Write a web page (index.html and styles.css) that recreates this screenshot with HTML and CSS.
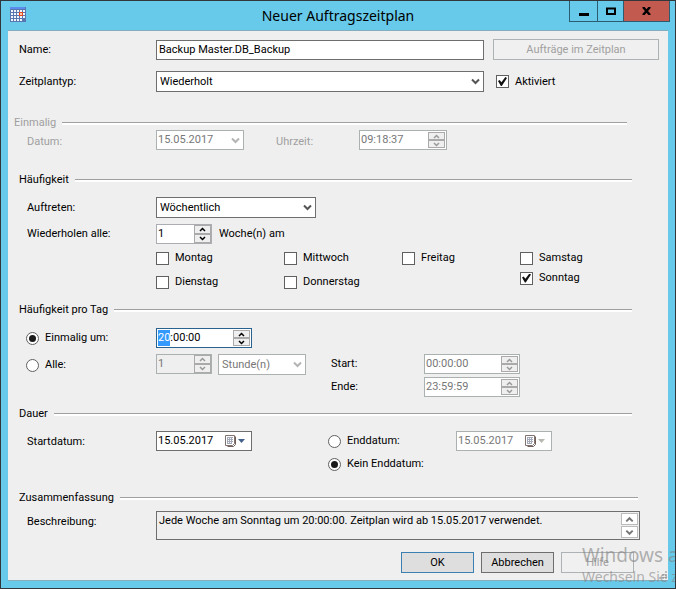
FILE: index.html
```html
<!DOCTYPE html>
<html lang="de">
<head>
<meta charset="utf-8">
<title>Neuer Auftragszeitplan</title>
<link rel="stylesheet" href="styles.css">
</head>
<body>
<svg class="defs" aria-hidden="true">
  <symbol id="chevron" viewBox="0 0 9 8"><path d="M1 1.500L4.500 5L8 1.500" fill="none" stroke="currentColor" stroke-width="2"/></symbol>
  <symbol id="up" viewBox="0 0 7 5"><path d="M1 4L3.500 1.500L6 4" fill="none" stroke="currentColor" stroke-width="1.500"/></symbol>
  <symbol id="down" viewBox="0 0 7 5"><path d="M1 1L3.500 3.500L6 1" fill="none" stroke="currentColor" stroke-width="1.500"/></symbol>
  <symbol id="calendar" viewBox="0 0 20 12">
    <path d="M2.500 11.500H8.500L10.500 9.500V1.500" fill="none" stroke="#70605c"/>
    <path d="M.5 .5H9.500V8.500L7.500 10.500H.5Z" fill="#fff" stroke="#82726e"/>
    <path d="M2 2.500H8M2 4.500H8M2 6.500H8M2 8.500H7M2.500 2V9M4.500 2V9M6.500 2V9" fill="none" stroke="#a3a9b8"/>
    <path d="M13 4H20L16.500 8Z" fill="currentColor"/>
  </symbol>
</svg>
<div class="window">
  <header class="titlebar">
    <svg class="app-icon" viewBox="0 0 16 15" aria-hidden="true">
      <rect width="16" height="15" fill="#5877ae"/>
      <rect width="15" height="2" fill="#5b8def"/>
      <path d="M1 3h2v2H1zM4 3h2v2H4zM7 3h2v2H7zM10 3h2v2h-2zM13 3h2v2h-2zM1 6h2v2H1zM4 6h2v2H4zM7 6h2v2H7zM13 6h2v2h-2zM1 9h2v2H1zM4 9h2v2H4zM7 9h2v2H7zM10 9h2v2h-2zM13 9h2v2h-2zM1 12h2v2H1zM4 12h2v2H4zM7 12h2v2H7zM10 12h2v2h-2z" fill="#f0f5ff"/>
      <rect x="9.500" y="5.500" width="3" height="3" fill="#ffc8a8" stroke="#e64a20"/>
    </svg>
    <h1>Neuer Auftragszeitplan</h1>
    <div class="window-buttons">
      <button type="button" class="minimize" aria-label="Minimieren"><svg width="10" height="9" viewBox="0 0 10 9"><path d="M0 6H10V9H0z"/></svg></button>
      <button type="button" class="maximize" aria-label="Maximieren"><svg width="10" height="8" viewBox="0 0 10 8"><path d="M1 1.500H9V7H1z" fill="none" stroke="#000" stroke-width="2"/></svg></button>
      <button type="button" class="close" aria-label="Schließen"><svg width="9" height="8" viewBox="0 0 9 8"><path d="M1 0L8 8M8 0L1 8" stroke="#000" stroke-width="2.400"/></svg></button>
    </div>
  </header>
  <form class="client">
    <div class="general">
      <label for="name">Name:</label>
      <input class="box" id="name" type="text" value="Backup Master.DB_Backup">
      <button type="button" class="push" disabled>Aufträge im Zeitplan</button>
      <label for="type">Zeitplantyp:</label>
      <span class="select"><select id="type"><option>Wiederholt</option></select><svg><use href="#chevron"/></svg></span>
      <label class="check"><input type="checkbox" checked>Aktiviert</label>
    </div>

    <section class="group once disabled">
      <h2>Einmalig</h2>
      <div class="row">
        <label class="caption" for="once-date">Datum:</label>
        <span class="select date"><select id="once-date" disabled><option>15.05.2017</option></select><svg><use href="#chevron"/></svg></span>
        <label class="time-label" for="once-time">Uhrzeit:</label>
        <span class="box field w88"><input id="once-time" type="text" value="09:18:37" disabled><span class="spin"><button type="button" disabled aria-label="Mehr"><svg><use href="#up"/></svg></button><button type="button" disabled aria-label="Weniger"><svg><use href="#down"/></svg></button></span></span>
      </div>
    </section>

    <section class="group frequency">
      <h2>Häufigkeit</h2>
      <div class="row">
        <label class="caption" for="occurs">Auftreten:</label>
        <span class="select w160"><select id="occurs"><option>Wöchentlich</option></select><svg><use href="#chevron"/></svg></span>
      </div>
      <div class="row">
        <label class="caption" for="every">Wiederholen alle:</label>
        <span class="box field number"><input id="every" type="text" value="1"><span class="spin"><button type="button" aria-label="Mehr"><svg><use href="#up"/></svg></button><button type="button" aria-label="Weniger"><svg><use href="#down"/></svg></button></span></span>
        <span class="unit">Woche(n) am</span>
      </div>
      <div class="days">
        <div><label class="check"><input type="checkbox">Montag</label><label class="check"><input type="checkbox">Dienstag</label></div>
        <div><label class="check"><input type="checkbox">Mittwoch</label><label class="check"><input type="checkbox">Donnerstag</label></div>
        <div><label class="check"><input type="checkbox">Freitag</label></div>
        <div class="weekend"><label class="check"><input type="checkbox">Samstag</label><label class="check"><input type="checkbox" checked>Sonntag</label></div>
      </div>
    </section>

    <section class="group daily">
      <h2>Häufigkeit pro Tag</h2>
      <div class="row">
        <label class="caption check"><input type="radio" name="daily" checked>Einmalig um:</label>
        <span class="box field w96 active"><input id="at" type="text" value="20:00:00" aria-label="Einmalig um"><span class="spin"><button type="button" aria-label="Mehr"><svg><use href="#up"/></svg></button><button type="button" aria-label="Weniger"><svg><use href="#down"/></svg></button></span></span>
      </div>
      <div class="row interval">
        <label class="caption check"><input type="radio" name="daily">Alle:</label>
        <span class="box field number disabled"><input type="text" value="1" disabled aria-label="Alle"><span class="spin"><button type="button" disabled aria-label="Mehr"><svg><use href="#up"/></svg></button><button type="button" disabled aria-label="Weniger"><svg><use href="#down"/></svg></button></span></span>
        <span class="select unit-select disabled"><select disabled aria-label="Einheit"><option>Stunde(n)</option></select><svg><use href="#chevron"/></svg></span>
        <div class="range">
          <label for="start">Start:</label>
          <span class="box field w96 disabled"><input id="start" type="text" value="00:00:00" disabled><span class="spin"><button type="button" disabled aria-label="Mehr"><svg><use href="#up"/></svg></button><button type="button" disabled aria-label="Weniger"><svg><use href="#down"/></svg></button></span></span>
          <label for="end">Ende:</label>
          <span class="box field w96 disabled"><input id="end" type="text" value="23:59:59" disabled><span class="spin"><button type="button" disabled aria-label="Mehr"><svg><use href="#up"/></svg></button><button type="button" disabled aria-label="Weniger"><svg><use href="#down"/></svg></button></span></span>
        </div>
      </div>
    </section>

    <section class="group duration">
      <h2>Dauer</h2>
      <div class="row interval">
        <label class="caption" for="start-date">Startdatum:</label>
        <span class="box field w96"><input id="start-date" type="text" value="15.05.2017"><button type="button" class="picker" aria-label="Kalender"><svg><use href="#calendar"/></svg></button></span>
        <div class="end-options">
          <label class="check"><input type="radio" name="end-option">Enddatum:</label>
          <span class="box field w96 disabled"><input type="text" value="15.05.2017" disabled aria-label="Enddatum"><button type="button" class="picker" disabled aria-label="Kalender"><svg><use href="#calendar"/></svg></button></span>
          <label class="check"><input type="radio" name="end-option" checked>Kein Enddatum:</label>
        </div>
      </div>
    </section>

    <section class="group summary">
      <h2>Zusammenfassung</h2>
      <div class="row interval">
        <label class="caption" for="description">Beschreibung:</label>
        <span class="box description"><textarea id="description" readonly>Jede Woche am Sonntag um 20:00:00. Zeitplan wird ab 15.05.2017 verwendet.</textarea><span class="scroll"><button type="button" aria-label="Nach oben"><svg><use href="#up"/></svg></button><button type="button" aria-label="Nach unten"><svg><use href="#down"/></svg></button></span></span>
      </div>
    </section>

    <footer class="actions">
      <button type="button" class="push default">OK</button>
      <button type="button" class="push">Abbrechen</button>
      <button type="button" class="push" disabled>Hilfe</button>
    </footer>
    <svg class="grip" viewBox="0 0 8 8" aria-hidden="true"><path d="M6 0h2v2H6zM3 3h2v2H3zM6 3h2v2H6zM0 6h2v2H0zM3 6h2v2H3zM6 6h2v2H6z" fill="#bbb"/></svg>
  </form>
  <div class="watermark"><p>Windows aktivieren</p><p>Wechseln Sie zur Systemsteuerung</p></div>
</div>
<script src="script.js"></script>
</body>
</html>
```
FILE: styles.css
```css
* { box-sizing: border-box; }

body {
  margin: 0;
  background: #67caea;
  color: #000;
  font: 11px/16px Roboto, "Liberation Sans", sans-serif;
}

h1, h2, p { margin: 0; font-weight: normal; }

input, select, button, textarea { font: inherit; color: inherit; margin: 0; }

.defs { position: absolute; width: 0; height: 0; }

.window {
  position: relative;
  min-height: 100vh;
  display: flex;
  flex-direction: column;
  overflow: hidden;
  padding: 0 7px 7px;
  border: 1px solid #33363b;
  background: #67caea;
}

.titlebar {
  display: grid;
  grid-template-columns: 1fr auto 1fr;
  height: 29px;
}

.app-icon { width: 16px; height: 15px; margin: 6px 0 0 2px; }

h1 { font: 14px/30px "Noto Sans", "Open Sans", sans-serif; }

.window-buttons { display: flex; justify-self: end; height: 21px; margin-right: -2px; }

.window-buttons button {
  display: flex;
  align-items: center;
  justify-content: center;
  width: 28px;
  padding: 0;
  border: solid #2b5c70;
  border-width: 0 0 1px 1px;
  background: none;
}

.window-buttons .maximize { width: 26px; }
.window-buttons .close { width: 47px; border-right-width: 1px; background: #c35a50; }

.client {
  position: relative;
  flex: 1;
  padding: 8px 9px 7px 11px;
  border: solid #85adbd;
  border-width: 1px 0;
  background: #efefef;
}

.general {
  display: grid;
  grid-template-columns: 137px minmax(0, 1fr) 175px;
  row-gap: 11px;
  align-items: center;
}

.general .push, .general .check { margin-left: 9px; }
.general .check { padding-left: 3px; }

.box {
  height: 20px;
  border: 1px solid #6e6e6e;
  border-radius: 0;
  background: #fff;
}

input.box { width: 100%; padding: 0 2px; outline: none; }

.field { display: flex; align-items: stretch; padding: 1px; flex: none; }
.field input {
  flex: 1;
  min-width: 0;
  width: 0;
  padding: 0 0 1px;
  border: 0;
  outline: none;
  background: none;
}
.field input::selection { background: #3399ff; color: #fff; }

.active { border-color: #2a628f; }
.w88, .date { width: 88px; }
.w96 { width: 96px; }
.w160 { width: 160px; }
.number { width: 56px; border-color: #abadb3; padding: 0 0 0 1px; }
.number.disabled { background: #efefef; }

.spin { display: flex; flex-direction: column; width: 17px; flex: none; }
.spin button {
  flex: 1;
  display: flex;
  align-items: center;
  justify-content: center;
  padding: 0;
  border: 1px solid #aaa;
  background: #efefef;
}
.spin svg { width: 7px; height: 5px; }

.picker { width: 25px; padding: 0; border: 0; background: none; color: #44618c; }
.picker svg { display: block; width: 20px; height: 12px; }

.select { position: relative; display: block; height: 21px; flex: none; }
.select select {
  appearance: none;
  display: block;
  width: 100%;
  height: 100%;
  padding: 0 20px 0 3px;
  border: 1px solid #6e6e6e;
  border-radius: 0;
  background: #fff;
  opacity: 1;
}
.select svg {
  position: absolute;
  top: 7px;
  right: 4px;
  width: 9px;
  height: 8px;
  color: #555;
  pointer-events: none;
}
.date { height: 20px; }
.date select { padding-left: 1px; }

.check { display: flex; align-items: center; gap: 6px; }
.check input {
  appearance: none;
  flex: none;
  display: grid;
  place-items: center;
  width: 13px;
  height: 13px;
  border: 1px solid #606060;
  background: #fff;
}
.check input[type="checkbox"]:checked::before {
  content: "";
  width: 9px;
  height: 9px;
  background: #111;
  clip-path: polygon(0 45%, 18% 34%, 38% 58%, 82% 0, 100% 12%, 42% 100%, 32% 100%);
}
.check input[type="radio"] { border-radius: 50%; }
.check input[type="radio"]:checked::before {
  content: "";
  width: 7px;
  height: 7px;
  border-radius: 50%;
  background: #1a1a1a;
}

.group { margin-right: 27px; }
.group h2 {
  display: flex;
  align-items: center;
  gap: 6px;
  margin-bottom: 9px;
  font-size: 11px;
  line-height: 16px;
}
.group h2::after {
  content: "";
  flex: 1;
  height: 2px;
  border-top: 1px solid #a0a0a0;
  background: #fff;
}

.row { display: flex; align-items: center; }
.row + .row { margin-top: 6px; }
.caption { flex: none; width: 137px; padding-left: 8px; }
.caption.check { padding-left: 7px; }

.group.once { margin: 23px 32px 0 0; }
.once h2 { margin: 0 0 -1px -5px; }
.once.disabled { color: #a0a0a0; }
.once .row { align-items: flex-end; }
.time-label { width: 83px; margin-left: 32px; }

.disabled input, .disabled select { color: #777; }
.disabled .box, .box.disabled, .disabled select { border-color: #abb0b0; }
.disabled svg { color: #999; }
.select.disabled svg, .disabled .select svg { color: #b4b4b4; }
.disabled .picker svg { color: #b8b8b0; }

.frequency { margin-top: 22px; }
.unit { margin-left: 7px; }

.days { display: grid; grid-template-columns: 128px 118px 118px auto; margin: 6px 0 0 137px; }
.days div { display: flex; flex-direction: column; gap: 8px; }
.days .weekend { gap: 4px; }

.daily { margin-top: 12px; }
.daily h2 { margin-bottom: 10px; }
.interval { align-items: flex-start; }
.interval > .caption { line-height: 22px; }
.unit-select { width: 88px; margin-left: 6px; }
.range {
  display: grid;
  grid-template-columns: 93px auto;
  row-gap: 3px;
  margin-left: 25px;
  align-items: center;
}

.duration { margin-top: 9px; }
.end-options {
  display: grid;
  grid-template-columns: 128px auto;
  row-gap: 5px;
  margin-left: 76px;
  align-items: center;
}

.group.summary { margin: 18px 19px 0 0; }
.summary h2 { margin: 0 2px 5px 0; }
.description { display: flex; flex: 1; height: 29px; padding: 1px; background: #efefef; }
.description textarea {
  flex: 1;
  padding: 0 1px;
  border: 0;
  outline: none;
  resize: none;
  overflow: hidden;
  background: none;
}
.scroll { display: flex; flex-direction: column; gap: 1px; width: 17px; }
.scroll button {
  flex: 1;
  display: flex;
  align-items: center;
  justify-content: center;
  padding: 0;
  border: 1px solid #bbb;
  background: #fff;
  color: #777;
}
.scroll svg { width: 9px; height: 7px; }

.actions { display: flex; justify-content: flex-end; gap: 7px; margin: 12px 25px 0 0; }
.push { height: 21px; padding: 0; border: 1px solid #6e6e6e; border-radius: 0; background: #dedede; }
.push:disabled { border-color: #adb2b5; background: #f0f0f0; color: #a0a0a0; }
.actions .push { width: 73px; }
.push.default { border-color: #3c7fb1; }

.grip { position: absolute; right: 1px; bottom: 1px; width: 8px; height: 8px; }

.watermark {
  position: absolute;
  top: 542px;
  left: 581px;
  color: rgba(130, 130, 130, .6);
  font-family: "Noto Sans", "Open Sans", sans-serif;
  white-space: nowrap;
  pointer-events: none;
}
.watermark p { font-size: 14px; line-height: 20px; }
.watermark p:first-child { font-size: 19px; line-height: 24px; }
```
FILE: script.js
```js
// Start with the hour part of the time selected.
const at = document.getElementById("at");
at.focus();
at.setSelectionRange(0, 2);
```
